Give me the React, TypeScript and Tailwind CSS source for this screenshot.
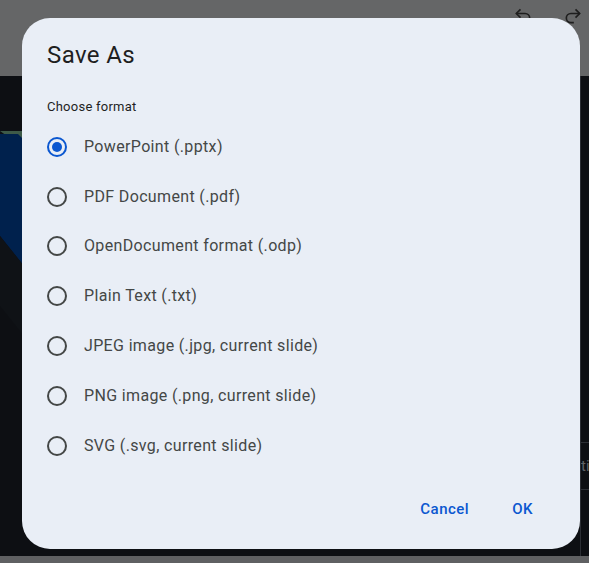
import React, { useState } from 'react'

const FORMATS = [
  'PowerPoint (.pptx)',
  'PDF Document (.pdf)',
  'OpenDocument format (.odp)',
  'Plain Text (.txt)',
  'JPEG image (.jpg, current slide)',
  'PNG image (.png, current slide)',
  'SVG (.svg, current slide)',
]

const Radio: React.FC<{ checked: boolean }> = ({ checked }) => (
  <span
    className={`w-5 h-5 rounded-full border-2 flex items-center justify-center shrink-0 ${
      checked ? 'border-[#0b57d0]' : 'border-[#444746]'
    }`}
  >
    {checked && <span className="w-2.5 h-2.5 rounded-full bg-[#0b57d0]" />}
  </span>
)

const App: React.FC = () => {
  const [selected, setSelected] = useState(0)

  return (
    <div
      className="relative w-[589px] h-[563px] overflow-hidden bg-[#0d0f13] flex flex-col"
      style={{ fontFamily: 'Roboto, "Noto Sans", sans-serif' }}
    >
      {/* toolbar behind the dialog */}
      <div className="h-[76px] bg-[#656667] shrink-0 flex justify-end items-start gap-[30px] pr-[6px] pt-[6px] text-[#1e1e1e]">
        <svg width="20" height="20" viewBox="0 0 24 24" fill="none" stroke="currentColor" strokeWidth="2">
          <path d="M9 14 4 9l5-5" />
          <path d="M4 9h10.5a5.5 5.5 0 0 1 0 11H11" />
        </svg>
        <svg width="20" height="20" viewBox="0 0 24 24" fill="none" stroke="currentColor" strokeWidth="2">
          <path d="m15 14 5-5-5-5" />
          <path d="M20 9H9.5a5.5 5.5 0 0 0 0 11H13" />
        </svg>
      </div>

      {/* slide area */}
      <div className="flex-1 flex justify-between">
        <svg width="24" height="480" viewBox="0 0 24 480" className="shrink-0">
          <polygon points="0,55 24,55 24,72" fill="#3e5a48" />
          <polygon points="0,58 18,58 24,64 24,190 0,160" fill="#00214d" />
          <polygon points="0,160 24,190 24,260 0,230" fill="#0f1216" />
        </svg>
        <div className="w-[9px] border-l border-[#2c2f35] flex flex-col pt-[366px]">
          <div className="h-[48px] border-y border-[#2c2f35] flex items-center text-[15px] text-[#5f6368] overflow-hidden whitespace-nowrap">
            ti
          </div>
        </div>
      </div>
      <div className="h-[7px] bg-[#5f6062] shrink-0" />

      {/* dialog */}
      <div className="absolute left-[22px] top-[18px] w-[558px] h-[531px] rounded-[28px] bg-[#e9eef6] flex flex-col pl-[25px] pr-[35px] pt-[21px]">
        <h1 className="text-[24px] leading-[32px] tracking-[0.4px] text-[#1f1f1f]">Save As</h1>
        <p className="mt-[26px] text-[13px] leading-[20px] tracking-[0.25px] text-[#1f1f1f]">
          Choose format
        </p>
        <ul className="mt-[5px]">
          {FORMATS.map((f, i) => (
            <li key={f}>
              <button
                onClick={() => setSelected(i)}
                className="h-[49.8px] w-full flex items-center gap-[17px] text-left"
              >
                <Radio checked={selected === i} />
                <span className="text-[16px] tracking-[0.35px] text-[#444746]">{f}</span>
              </button>
            </li>
          ))}
        </ul>
        <div className="mt-[19px] flex justify-end gap-[19px]">
          <button className="h-10 px-3 text-[15px] font-medium tracking-[0.5px] text-[#0b57d0]">Cancel</button>
          <button className="h-10 px-3 text-[15px] font-medium tracking-[0.5px] text-[#0b57d0]">OK</button>
        </div>
      </div>
    </div>
  )
}

export default App
